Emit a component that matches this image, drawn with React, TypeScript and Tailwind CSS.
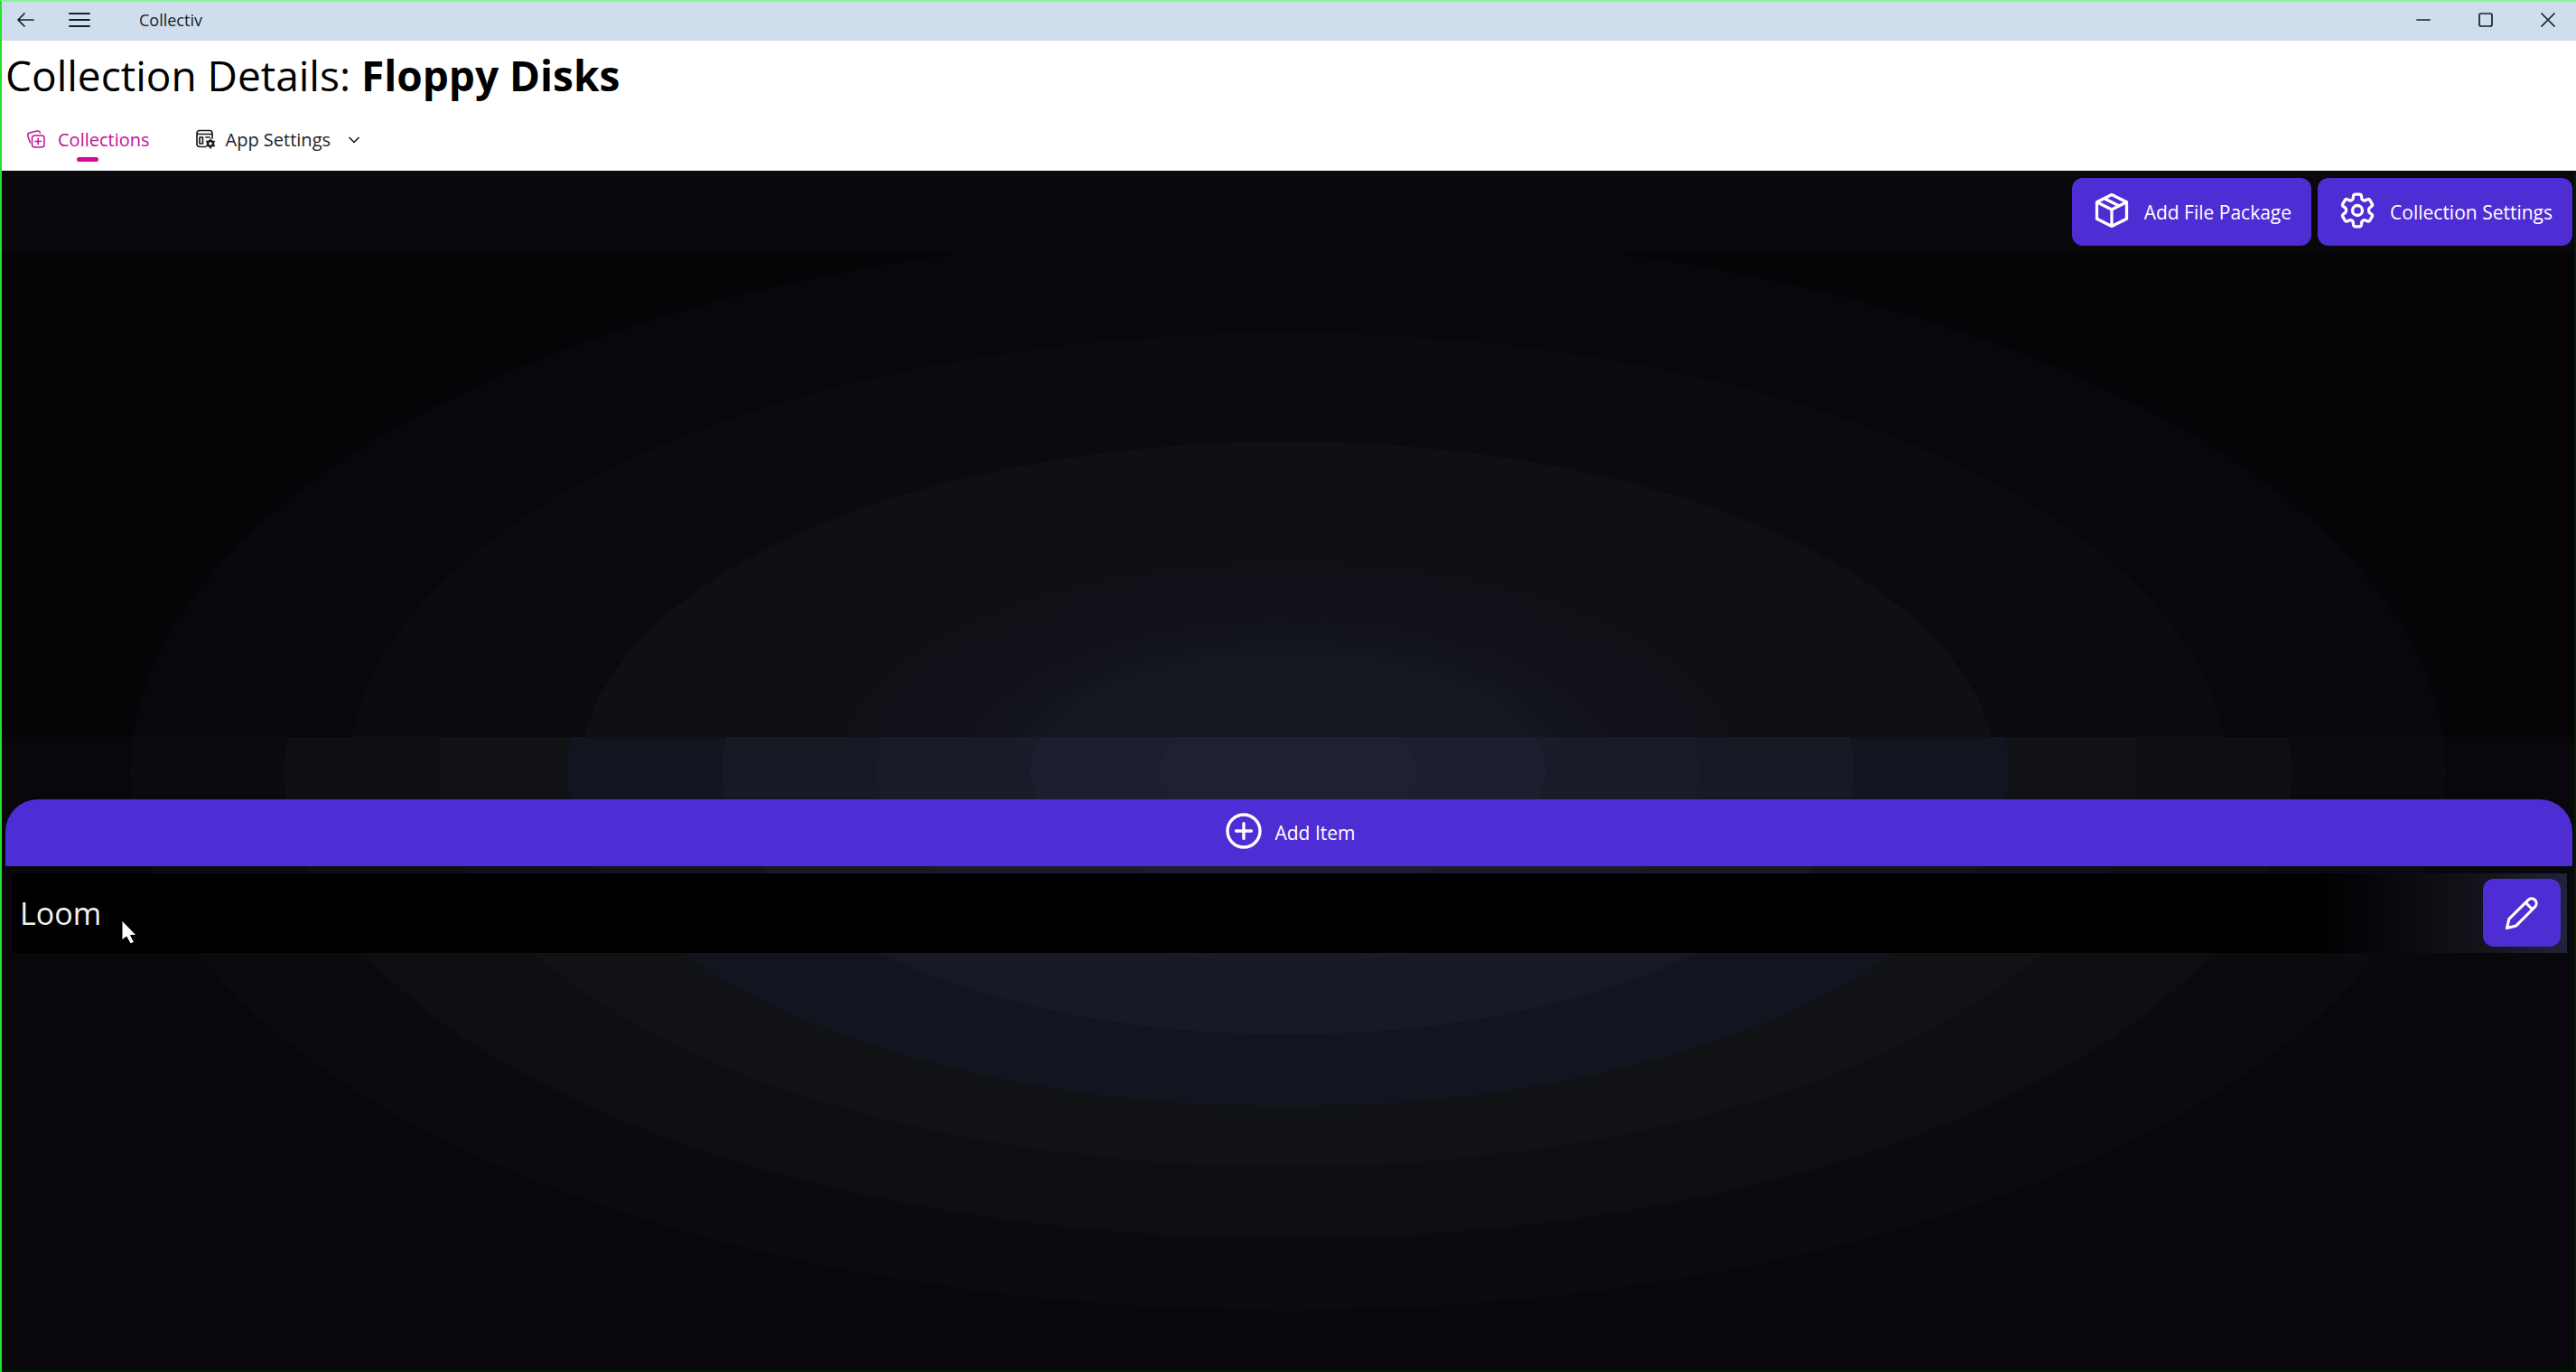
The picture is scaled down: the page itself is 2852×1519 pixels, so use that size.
import { ReactNode } from "react";
import { ChevronDown } from "lucide-react";

type IconProps = { className: string; children: ReactNode; viewBox?: string; width?: number };

function Icon({ className, children, viewBox = "0 0 24 24", width = 1.7 }: IconProps) {
  return (
    <svg
      aria-hidden="true"
      className={className}
      viewBox={viewBox}
      fill="none"
      stroke="currentColor"
      strokeWidth={width}
      strokeLinecap="round"
      strokeLinejoin="round"
    >
      {children}
    </svg>
  );
}

function TitleBar() {
  return (
    <header className="flex h-[43px] items-center bg-[#cfdeec] pb-1 pl-[14px] text-[#15202e]">
      <button aria-label="Back" className="flex w-6 justify-center">
        <Icon className="h-5 w-6" viewBox="0 0 24 20">
          <path d="M4 10h17M11 3l-7 7 7 7" />
        </Icon>
      </button>
      <button aria-label="Menu" className="ml-9 flex w-6 justify-center">
        <Icon className="h-5 w-6" viewBox="0 0 24 20" width={1.8}>
          <path d="M1 3h22M1 10h22M1 17h22" />
        </Icon>
      </button>
      <span className="ml-[54px] grow text-[18px] leading-6">Collectiv</span>
      <div className="flex gap-[51px] pr-[22px]">
        <button aria-label="Minimize">
          <Icon className="size-[18px]" viewBox="0 0 18 18"><path d="M2 9h14" /></Icon>
        </button>
        <button aria-label="Maximize">
          <Icon className="size-[18px]" viewBox="0 0 18 18"><rect x="2" y="2" width="14" height="14" rx="2" /></Icon>
        </button>
        <button aria-label="Close">
          <Icon className="size-[18px]" viewBox="0 0 18 18"><path d="m2 2 14 14M16 2 2 16" /></Icon>
        </button>
      </div>
    </header>
  );
}

function Navigation() {
  return (
    <nav className="flex h-16 items-start px-[26px] pt-[6px] text-[20px] leading-7">
      <a href="#collections" className="relative flex h-12 items-center text-[#c2109b]">
        <Icon className="mr-3 size-6" width={1.5}>
          <path d="M5.500 15 2.800 7.500A3 3 0 0 1 5 4l8-2a3 3 0 0 1 3.500 2" />
          <rect x="7.500" y="7" width="13.500" height="13" rx="3" />
          <path d="M14.200 10.200v6.600M10.900 13.500h6.600" />
        </Icon>
        Collections
        <span className="absolute bottom-0 left-[57px] h-[5px] w-6 rounded-full bg-[#d5089a]" />
      </a>
      <button className="ml-[50px] flex h-12 items-center text-[#1d1d1d]">
        <Icon className="mr-[10px] size-6">
          <path d="M11.500 19.500H5a3 3 0 0 1-3-3V4.500a3 3 0 0 1 3-3h11a3 3 0 0 1 3 3V10M2 5.500h17M12 9h4" />
          <path d="M5 9h3.500v7H5z" />
          <circle cx="17" cy="16" r="3" strokeWidth="2.600" />
          <path d="M17 11v1.500M17 19.500V21M12.700 13.500l1.300.800M20 17.700l1.300.800M12.700 18.500l1.300-.800M20 14.300l1.300-.800" />
        </Icon>
        App Settings
        <ChevronDown className="ml-4 size-5" strokeWidth={2} />
      </button>
    </nav>
  );
}

const actionClass =
  "flex h-[75px] items-center justify-center rounded-xl bg-[#4f2dd4] text-[21px] leading-7 text-white";

function Toolbar() {
  return (
    <div className="flex h-[91px] items-center justify-end gap-[7px] bg-[#08080d] pr-[2px]">
      <button className={`${actionClass} px-[22px]`}>
        <Icon className="mr-[14px] size-11 -translate-y-0.5" width={1.8}>
          <path d="M12 2.500 21 7v10l-9 4.500L3 17V7zM3 7l9 4.500L21 7M12 11.500v10M7.500 4.800l9 4.500" />
        </Icon>
        Add File Package
      </button>
      <button className={`${actionClass} px-[22px]`}>
        <Icon className="mr-[14px] size-11 -translate-y-0.5" width={1.8}>
          <path d="M9.594 3.240c.090-.542.560-.940 1.110-.940h2.593c.550 0 1.020.398 1.110.940l.213 1.581c.063.374.313.686.645.870.074.040.147.083.220.127.325.196.720.257 1.075.124l1.617-.656a1.125 1.125 0 0 1 1.370.490l1.296 2.247a1.125 1.125 0 0 1-.260 1.431l-1.303 1.027c-.293.241-.438.613-.430.992a7.723 7.723 0 0 1 0 .855c-.008.378.137.750.430.991l1.304 1.027c.424.350.534.955.260 1.430l-1.298 2.247a1.125 1.125 0 0 1-1.369.491l-1.617-.656c-.355-.133-.750-.072-1.076.124a6.470 6.470 0 0 1-.220.128c-.331.183-.581.495-.644.869l-.213 1.781c-.090.543-.560.940-1.110.940h-2.594c-.550 0-1.019-.398-1.110-.940l-.213-1.781c-.062-.374-.312-.686-.644-.870a6.520 6.520 0 0 1-.220-.127c-.325-.196-.720-.257-1.076-.124l-1.617.656a1.125 1.125 0 0 1-1.369-.490l-1.297-2.247a1.125 1.125 0 0 1 .260-1.431l1.304-1.027c.292-.240.437-.613.430-.991a6.932 6.932 0 0 1 0-.855c.007-.380-.138-.751-.430-.992l-1.304-1.027a1.125 1.125 0 0 1-.260-1.430l1.297-2.247a1.125 1.125 0 0 1 1.370-.491l1.616.656c.356.133.751.072 1.076-.124.072-.044.146-.086.220-.128.332-.183.582-.495.644-.869l.214-1.580Z" />
          <circle cx="12" cy="12" r="3" />
        </Icon>
        Collection Settings
      </button>
    </div>
  );
}

function ItemRow({ name }: { name: string }) {
  return (
    <li className="mr-2 ml-[11px] flex h-[88px] items-center justify-between bg-[linear-gradient(90deg,#000_90%,#08080d_93%,#111117_96%,#20233a)] pr-[7px] pl-[9px]">
      <span className="text-[34px] leading-10 text-[#f1f1f1]">{name}</span>
      <button aria-label={`Edit ${name}`} className={`${actionClass} w-[86px]`}>
        <Icon className="size-11">
          <path d="M3 21l1.300-5.500L15.900 4a2.900 2.900 0 0 1 4.100 4.100L8.600 19.600zM14.300 5.600l4.100 4.100" />
        </Icon>
      </button>
    </li>
  );
}

export default function App() {
  return (
    <div className="relative flex min-h-screen flex-col border-t-2 border-l-2 border-t-[#86f79a] border-l-[#25e12b] bg-white font-['Open_Sans',sans-serif]">
      <TitleBar />
      <h1 className="h-20 pt-[6px] pl-1 text-[46px] leading-[64px] text-black">
        Collection Details: <b className="font-bold">Floppy Disks</b>
      </h1>
      <Navigation />
      <main className="flex grow flex-col border-r-2 border-b-2 border-[#041a06] bg-[radial-gradient(50%_50%_at_50%_50%,#1f2033_10%,#1c1f2f_10%_20%,#191b28_20%_32%,#171a25_32%_44%,#12141f_44%_56%,#101216_56%_66%,#0e0f12_66%_78%,#0b0b0f_78%_90%,#08080c_90%)]">
        <Toolbar />
        <div className="flex-[537] bg-[radial-gradient(50%_124.500%_at_50%_107.500%,#141620_20%,#11121a_24%,#101117_35%,#0f1014_35%_55%,#0b0b0f_55%_73%,#08080c_73%_90%,#050508_90%_99%,#040404_100%)]" />
        <button className="mr-[2px] ml-1 mt-[69px] flex h-[74px] shrink-0 items-center justify-center rounded-t-[36px] bg-[#4f2dd4] text-[21px] leading-7 text-white">
          <Icon className="mr-[10px] size-12 -translate-y-0.5">
            <circle cx="12" cy="12" r="9" />
            <path d="M12 7.800v8.400M7.800 12h8.400" />
          </Icon>
          Add Item
        </button>
        <ul className="mt-2">
          <ItemRow name="Loom" />
        </ul>
        <div className="flex-[463]" />
      </main>
      <svg aria-hidden="true" className="absolute top-[1016px] left-[131px] h-8 w-5" viewBox="0 0 20 32">
        <path d="M2 1v22l5-4 4.500 8 4-2-4-7.500H18z" fill="#fff" stroke="#000" />
      </svg>
    </div>
  );
}
